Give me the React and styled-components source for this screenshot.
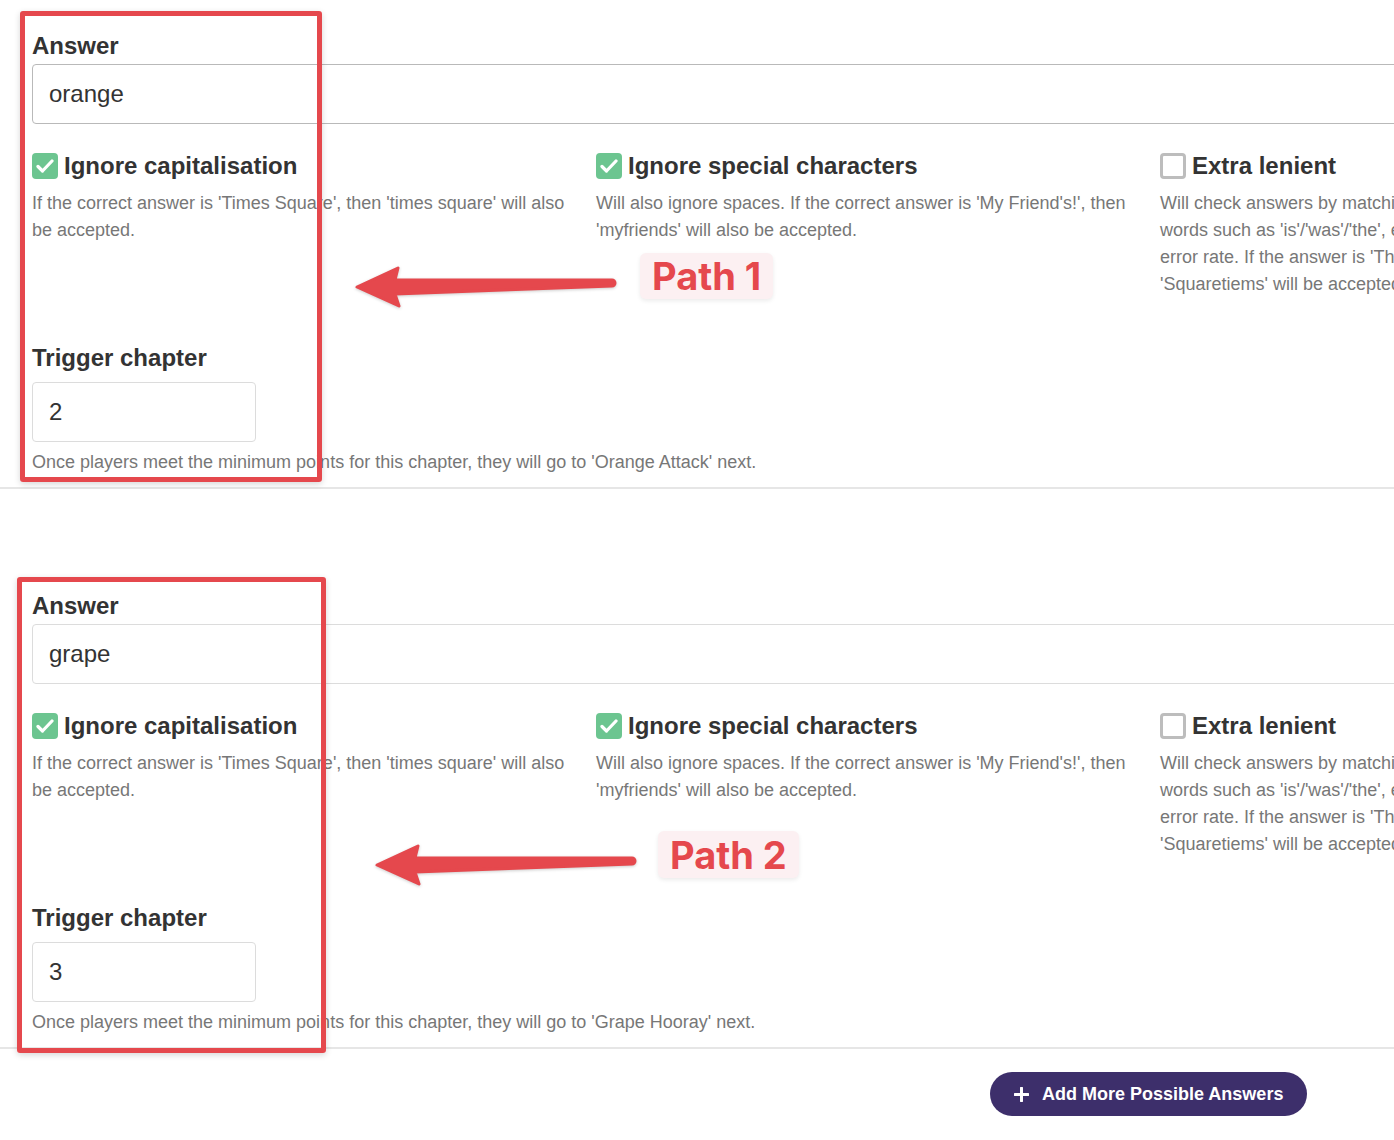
import React from "react";
import styled, { createGlobalStyle } from "styled-components";

const GlobalStyle = createGlobalStyle`
  html, body {
    margin: 0;
    padding: 0;
    background: #ffffff;
    overflow-x: hidden;
  }
  body {
    font-family: "Liberation Sans", Arial, Helvetica, sans-serif;
    color: #333333;
  }
  * { box-sizing: border-box; }
`;

const Page = styled.div`
  width: 1732px;
  padding-bottom: 40px;
`;

const Section = styled.section`
  position: relative;
  padding: 32px 0 11px 32px;
  border-bottom: 2px solid #e6e6e6;
  & + & {
    margin-top: 71px;
  }
`;

const Form = styled.div`
  width: 1668px;
  display: flex;
  flex-direction: column;
`;

const FieldLabel = styled.label`
  display: block;
  font-size: 24px;
  line-height: 28px;
  font-weight: 700;
  color: #333333;
  margin-top: ${(p) => p.$top || 0}px;
  margin-bottom: ${(p) => p.$gap || 4}px;
`;

const TextInput = styled.div`
  height: 60px;
  width: ${(p) => (p.$width ? `${p.$width}px` : "100%")};
  border: 1px solid ${(p) => (p.$focused ? "#b9b9b9" : "#dcdcdc")};
  border-radius: 4px;
  padding: 0 16px;
  display: flex;
  align-items: center;
  font-size: 24px;
  color: #333333;
  background: #fff;
`;

const OptionsGrid = styled.div`
  display: grid;
  grid-template-columns: repeat(3, 540px);
  column-gap: 24px;
  margin-top: 28px;
`;

const Option = styled.div`
  display: flex;
  flex-direction: column;
`;

const OptionHeader = styled.div`
  display: flex;
  align-items: center;
  gap: 6px;
  height: 28px;
`;

const Box = styled.span`
  width: 26px;
  height: 26px;
  flex: none;
  border-radius: 4px;
  display: flex;
  align-items: center;
  justify-content: center;
  background: ${(p) => (p.$checked ? "#6cc590" : "#ffffff")};
  border: ${(p) => (p.$checked ? "none" : "3px solid #bdbdbd")};
`;

const OptionTitle = styled.span`
  font-size: 24px;
  line-height: 28px;
  font-weight: 700;
  color: #333333;
  white-space: nowrap;
`;

const Description = styled.p`
  margin: 10px 0 0 0;
  font-size: 18px;
  line-height: 27px;
  color: #777777;
`;

const HelpText = styled.p`
  margin: 7px 0 0 0;
  font-size: 18px;
  line-height: 27px;
  color: #777777;
  white-space: nowrap;
`;

const Footer = styled.div`
  display: flex;
  padding-left: 990px;
  margin-top: 23px;
`;

const AddButton = styled.button`
  height: 44px;
  border: none;
  border-radius: 22px;
  background: #3d2f6b;
  color: #ffffff;
  font-family: "Liberation Sans", Arial, sans-serif;
  font-weight: 700;
  font-size: 18px;
  padding: 0 24px 0 24px;
  display: flex;
  align-items: center;
  gap: 13px;
  cursor: pointer;
`;

/* Annotation overlays */
const RedFrame = styled.div`
  position: absolute;
  left: ${(p) => p.$x}px;
  top: ${(p) => p.$y}px;
  width: ${(p) => p.$w}px;
  height: ${(p) => p.$h}px;
  border: 5px solid #e5484d;
  border-radius: 3px;
  box-shadow: 0 2px 6px rgba(0, 0, 0, 0.16);
  pointer-events: none;
`;

const ArrowWrap = styled.svg`
  position: absolute;
  left: ${(p) => p.$x}px;
  top: ${(p) => p.$y}px;
  filter: drop-shadow(0 1px 1.5px rgba(0, 0, 0, 0.2));
  overflow: visible;
`;

const PathTag = styled.div`
  position: absolute;
  left: ${(p) => p.$x}px;
  top: ${(p) => p.$y}px;
  height: ${(p) => p.$h}px;
  padding: 0 ${(p) => p.$pad}px;
  display: flex;
  align-items: center;
  background: #fcf0f2;
  border-radius: 6px;
  box-shadow: 0 2px 4px rgba(0, 0, 0, 0.08);
  font-family: Inter, "Noto Sans", sans-serif;
  font-weight: 700;
  font-size: 38px;
  color: #e5484d;
  white-space: nowrap;
`;

const Check = () => (
  <svg width="18" height="14" viewBox="0 0 18 14" fill="none">
    <path
      d="M2 7.5 L6.5 12 L16 2"
      stroke="#ffffff"
      strokeWidth="3.2"
      strokeLinecap="round"
      strokeLinejoin="round"
    />
  </svg>
);

const Checkbox = ({ checked }) => (
  <Box $checked={checked}>{checked ? <Check /> : null}</Box>
);

const Arrow = ({ x, y }) => (
  <ArrowWrap $x={x} $y={y} width="264" height="46" viewBox="0 0 264 46">
    <path
      d="M3 22 L44 3 L41 15 L258 15 A3 3 0 0 1 258 21 L41 29 L45 41 Z"
      fill="#e5484d"
      stroke="#e5484d"
      strokeWidth="3"
      strokeLinejoin="round"
    />
  </ArrowWrap>
);

const PlusIcon = () => (
  <svg width="15" height="15" viewBox="0 0 15 15">
    <path d="M7.5 1 V14 M1 7.5 H14" stroke="#ffffff" strokeWidth="3" strokeLinecap="round" />
  </svg>
);

const options = [
  {
    title: "Ignore capitalisation",
    checked: true,
    text: "If the correct answer is 'Times Square', then 'times square' will also be accepted.",
  },
  {
    title: "Ignore special characters",
    checked: true,
    text: "Will also ignore spaces. If the correct answer is 'My Friend's!', then 'myfriends' will also be accepted.",
  },
  {
    title: "Extra lenient",
    checked: false,
    text: "Will check answers by matching keywords and ignoring common words such as 'is'/'was'/'the', etc. and allows for a small spelling error rate. If the answer is 'The Times Square', then even 'Squaretiems' will be accepted.",
  },
];

const paths = [
  {
    answer: "orange",
    focused: true,
    chapter: "2",
    next: "Orange Attack",
    frame: { x: 20, y: 11, w: 302, h: 471 },
    arrow: { x: 354, y: 265 },
    tag: { x: 640, y: 253, h: 46, pad: 12, label: "Path 1" },
  },
  {
    answer: "grape",
    focused: false,
    chapter: "3",
    next: "Grape Hooray",
    frame: { x: 17, y: 17, w: 309, h: 476 },
    arrow: { x: 374, y: 283 },
    tag: { x: 658, y: 271, h: 47, pad: 12, label: "Path 2" },
  },
];

export default function App() {
  return (
    <>
      <GlobalStyle />
      <Page>
        {paths.map((p) => (
          <Section key={p.answer}>
            <Form>
              <FieldLabel>Answer</FieldLabel>
              <TextInput $focused={p.focused}>{p.answer}</TextInput>
              <OptionsGrid>
                {options.map((o) => (
                  <Option key={o.title}>
                    <OptionHeader>
                      <Checkbox checked={o.checked} />
                      <OptionTitle>{o.title}</OptionTitle>
                    </OptionHeader>
                    <Description>{o.text}</Description>
                  </Option>
                ))}
              </OptionsGrid>
              <FieldLabel $top={46} $gap={10}>
                Trigger chapter
              </FieldLabel>
              <TextInput $width={224}>{p.chapter}</TextInput>
              <HelpText>
                Once players meet the minimum points for this chapter, they will go to '{p.next}' next.
              </HelpText>
            </Form>
            <RedFrame $x={p.frame.x} $y={p.frame.y} $w={p.frame.w} $h={p.frame.h} />
            <Arrow x={p.arrow.x} y={p.arrow.y} />
            <PathTag $x={p.tag.x} $y={p.tag.y} $h={p.tag.h} $pad={p.tag.pad}>
              {p.tag.label}
            </PathTag>
          </Section>
        ))}
        <Footer>
          <AddButton>
            <PlusIcon />
            Add More Possible Answers
          </AddButton>
        </Footer>
      </Page>
    </>
  );
}
